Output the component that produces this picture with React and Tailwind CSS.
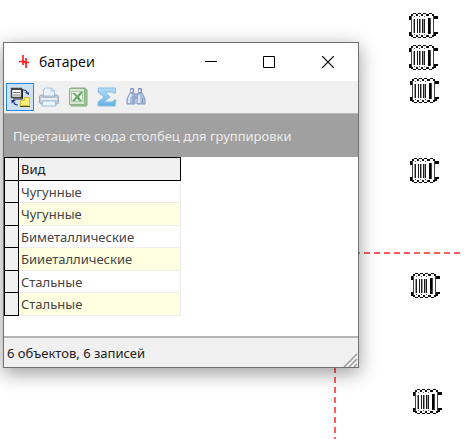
import React from "react";

const rows = ["Чугунные", "Чугунные", "Биметаллические", "Бииеталлические", "Стальные", "Стальные"];

function Radiator({ className }) {
  return (
    <svg className={`absolute h-[26px] w-[30px] ${className}`} viewBox="0 0 30 26" shapeRendering="crispEdges" aria-hidden="true">
      <path d="M0 3h2v4H0zM0 19h2v4H0zM25 3h4v3h-4zM25 19h4v2h-2v2h-2z" fill="#000" />
      <path
        d="M4 0h3v1H4zM9 0h3v1H9zM14 0h3v1h-3zM20 0h3v1h-3zM2 1h2v2H2zM7 1h2v2H7zM12 1h2v2h-2zM17 1h3v2h-3zM23 1h2v2h-2zM4 24h3v1H4zM9 24h3v1H9zM14 24h3v1h-3zM20 24h3v1h-3zM2 22h2v2H2zM7 22h2v2H7zM12 22h2v2h-2zM17 22h3v2h-3zM23 22h2v2h-2z"
        fill="#111"
      />
      <path d="M5 3h1v1H5zM10 3h1v1h-1zM15 3h1v1h-1zM5 21h1v1H5zM10 21h1v1h-1zM15 21h1v1h-1z" fill="#555" />
      <path d="M2 3h1v19H2zM24 3h1v19h-1z" fill="#444" />
      <path d="M4 6h1v14H4z" fill="#999" />
      <path d="M5 6h1v14H5zM8 6h1v14H8zM10 6h1v14h-1zM13 6h1v14h-1zM15 6h1v14h-1z" fill="#1c1c1c" />
      <path d="M11 6h1v14h-1zM14 6h1v14h-1z" fill="#999" />
      <path d="M19 5h2v16h-2z" fill="#000" />
      <path d="M21 5h1v16h-1z" fill="#444" />
    </svg>
  );
}

function LayoutIcon() {
  return (
    <svg className="h-5 w-5" viewBox="0 0 20 20" aria-hidden="true">
      <path d="M1.500 1.500h10v9h-10z" fill="#fff" stroke="#444" strokeWidth="1.500" />
      <path d="M1 1h11v2H1z" fill="#444" />
      <path d="M12.500 2v10H3" fill="none" stroke="#222" />
      <path d="M3 5.500h7M3 8h7" stroke="#777" />
      <path d="M14.500 10.500h5v8h-9v-5h4z" fill="#fff27a" stroke="#d8bd35" />
      <path d="M10 19.500h10" stroke="#5a4a10" />
      <path d="M13 3q4 0 4 3M8 18q-4 0-4-3" fill="none" stroke="#1a2c90" strokeWidth="1.200" />
      <path d="M14.500 5.500H19V8zM1.500 16.500V13H6z" fill="#1a2c90" />
    </svg>
  );
}

function PrinterIcon() {
  return (
    <svg className="h-5 w-5" viewBox="0 0 20 20" aria-hidden="true">
      <path d="M4.500 9V3q0-2 2-2h6l3 3v5z" fill="#e9f4ff" stroke="#a5c4e4" />
      <path d="M12 1v3h4" fill="none" stroke="#a5c4e4" />
      <path d="M.5 10q0-2 2-2h2v2h11V8h2q2 0 2 2v5q0 2-2 2h-15q-2 0-2-2z" fill="#c3cdd8" stroke="#9aabbd" />
      <path d="M2 12h16" stroke="#e7edf3" strokeWidth="2" />
      <path d="M4 14h12l1 5H3z" fill="#e9f6ff" stroke="#a0c0e0" />
    </svg>
  );
}

function ExcelIcon() {
  return (
    <svg className="h-5 w-5" viewBox="0 0 20 20" aria-hidden="true">
      <path d="M3 1h14l2 2v15q0 1-1 1H3z" fill="#9fc49a" stroke="#83ab7e" />
      <path d="M1.500 1.500h15v16h-15z" fill="#d5e6d1" stroke="#8db588" />
      <path d="M3.500 4.500h11v10h-11z" fill="#f1f7ef" stroke="#a9cba5" />
      <path d="M4 6h3l2.500 2.500L12 5h3l-4 5 3 4h-3l-2-2.500L7 14H4l4-4.500z" fill="#6aa66c" />
    </svg>
  );
}

function SigmaIcon() {
  return (
    <svg className="h-5 w-5" viewBox="0 0 20 20" aria-hidden="true">
      <defs>
        <linearGradient id="sigma" x2="0" y2="1">
          <stop stopColor="#b5def7" />
          <stop offset="1" stopColor="#62afe5" />
        </linearGradient>
      </defs>
      <path d="M1.500 1h17v5h-2q-1-1-3-1H8l5 5-6 5h7q2 0 3-2h2l-1 6h-17v-4l6-5-6-5z" fill="url(#sigma)" stroke="#84c1e8" />
    </svg>
  );
}

function BinocularsIcon() {
  return (
    <svg className="h-5 w-5" viewBox="0 0 20 20" aria-hidden="true">
      <g fill="#aebfdd" stroke="#8497c0">
        <path d="M4.500 1.500h3v4h-3zM12.500 1.500h3v4h-3zM8 7h4v4H8z" />
        <path d="M4 6h4l1 5v6H1v-5zM12 6h4l3 6v5h-8v-6z" />
      </g>
      <path d="M5 7l-2 5v4M13 8v8M5.500 3v2M13.500 3v2" stroke="#edf4ff" strokeWidth="1.500" fill="none" />
      <path d="M7 9v7M16.500 11v5" stroke="#8196bc" />
    </svg>
  );
}

const tools = [
  { label: "Группировка", Icon: LayoutIcon },
  { label: "Печать", Icon: PrinterIcon },
  { label: "Экспорт в Excel", Icon: ExcelIcon },
  { label: "Сумма", Icon: SigmaIcon },
  { label: "Поиск", Icon: BinocularsIcon },
];

function TitleBar() {
  return (
    <header className="flex h-[38px] items-center bg-white pl-[14px]">
      <svg className="h-4 w-3" viewBox="0 0 12 16" aria-hidden="true">
        <path d="M5 1v10M8 4v10M1 7.500h7M5 8.500h6" stroke="#f22" strokeWidth="1.700" />
      </svg>
      <h1 className="ml-[9px] grow font-['Open_Sans',sans-serif] text-[14px] leading-5 text-black">батареи</h1>
      <button aria-label="Свернуть" className="flex h-full w-[58px] items-center justify-center">
        <svg className="h-3 w-3" viewBox="0 0 12 12"><path d="M0 5.500h12" stroke="#000" /></svg>
      </button>
      <button aria-label="Развернуть" className="flex h-full w-[58px] items-center justify-center">
        <svg className="h-3 w-3" viewBox="0 0 12 12"><path d="M.5.5h11v11H.5z" fill="none" stroke="#000" /></svg>
      </button>
      <button aria-label="Закрыть" className="flex h-full w-[60px] items-center justify-center">
        <svg className="h-3 w-3" viewBox="0 0 12 12"><path d="M0 0l12 12M12 0L0 12" stroke="#000" strokeWidth="1.200" /></svg>
      </button>
    </header>
  );
}

export default function App() {
  return (
    <main className="relative min-h-screen w-full overflow-hidden bg-white font-['Noto_Sans',sans-serif] text-[#222222]">
      <svg className="absolute inset-0 h-full w-full" aria-hidden="true">
        <path d="M354 253H461M335 367V439" stroke="#ff5c5c" strokeWidth="2" strokeDasharray="6 4" />
      </svg>
      <Radiator className="left-[409px] top-[13px]" />
      <Radiator className="left-[409px] top-[45px]" />
      <Radiator className="left-[410px] top-[78px]" />
      <Radiator className="left-[410px] top-[158px]" />
      <Radiator className="left-[411px] top-[273px]" />
      <Radiator className="left-[413px] top-[389px]" />

      <section className="absolute left-[3px] top-[42px] flex w-[356px] flex-col border border-[#707070] bg-white shadow-[0_5px_18px_rgba(0,0,0,0.4)]">
        <TitleBar />
        <div className="flex h-8 items-center gap-px bg-[#f0f0f0] pl-[2px]">
          {tools.map(({ label, Icon }, i) => (
            <button
              key={label}
              aria-label={label}
              className={`flex h-7 w-7 items-center justify-center border ${i === 0 ? "border-[#2488dc] bg-[#cde2f4]" : "border-transparent"}`}
            >
              <Icon />
            </button>
          ))}
        </div>
        <p className="flex h-11 items-center border-t border-[#b8b8b8] bg-[#a0a0a0] pl-[9px] text-[13px] leading-5 text-[#ececec]">
          Перетащите сюда столбец для группировки
        </p>
        <div className="h-[179px]">
          <table className="w-[177px] table-fixed border-collapse text-left text-[13px] leading-5">
            <thead>
              <tr className="h-[23px] bg-[#f0f0f0]">
                <td className="w-[14px] border border-black p-0" />
                <th className="border border-black py-0 pl-[2px] font-normal">Вид</th>
              </tr>
            </thead>
            <tbody>
              {rows.map((name, i) => (
                <tr key={i} className="odd:h-[22px] even:h-[23px] even:bg-[#ffffe1]">
                  <td className="border border-black bg-[#f0f0f0] p-0" />
                  <td className="border-b border-r border-[#eeeeee] py-0 pl-[2px] text-[#444444]">{name}</td>
                </tr>
              ))}
            </tbody>
          </table>
        </div>
        <footer className="flex h-[31px] items-center justify-between border-t-2 border-[#b4b4b4] bg-[#f0f0f0] pl-[3px] text-[13px] leading-5">
          6 объектов, 6 записей
          <svg className="h-[14px] w-[15px] self-end" viewBox="0 0 15 14" aria-hidden="true">
            <path d="M1 14L14 1M6 14l8-8M11 14l3-3" stroke="#a0a0a0" strokeWidth="1.600" />
          </svg>
        </footer>
      </section>
    </main>
  );
}
